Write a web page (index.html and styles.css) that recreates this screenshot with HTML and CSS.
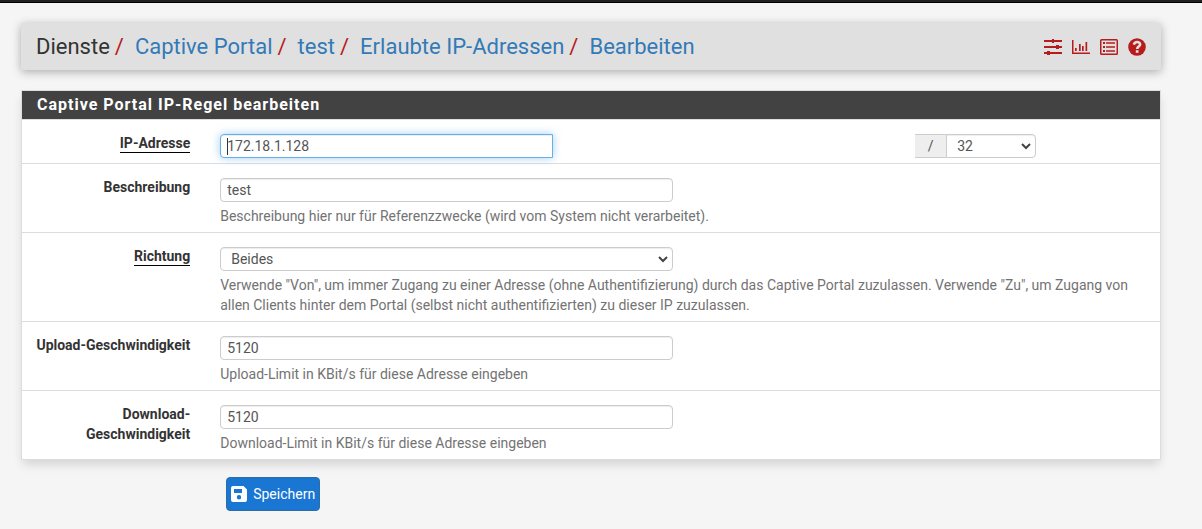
FILE: index.html
```html
<!DOCTYPE html>
<html lang="de">
<head>
<meta charset="utf-8">
<meta name="viewport" content="width=device-width, initial-scale=1">
<title>Captive Portal IP-Regel bearbeiten</title>
<link rel="stylesheet" href="styles.css">
</head>
<body>
<div class="topbar"></div>
<main class="container">
  <header class="header">
    <ol class="breadcrumb">
      <li>Dienste</li>
      <li><a href="#">Captive Portal</a></li>
      <li><a href="#">test</a></li>
      <li><a href="#">Erlaubte IP-Adressen</a></li>
      <li><a href="#">Bearbeiten</a></li>
    </ol>
    <nav class="tools">
      <a href="#" aria-label="Einstellungen"><svg width="18" height="18" viewBox="0 0 18 18" fill="currentColor"><path d="M0 2h8V1h2v1h8v2h-8v1H8V4H0zM0 8h12V7h3v1h3v2h-3v1h-3v-1H0zM0 14h3v-1h3v1h12v2H6v1H3v-1H0z"/></svg></a>
      <a href="#" aria-label="Status"><svg width="18" height="18" viewBox="0 0 18 18" fill="currentColor"><path d="M0 2h1.500v12.500H18V16H0zM3 10h1.700v3H3zM7 6h1.700v7H7zM10 8h1.700v5H10zM13.500 4h1.700v9h-1.700z"/></svg></a>
      <a href="#" aria-label="Protokoll"><svg width="18" height="18" viewBox="0 0 18 18" fill="currentColor"><path fill-rule="evenodd" d="M1.500 1h15A1.500 1.500 0 0 1 18 2.500v13a1.500 1.500 0 0 1-1.500 1.500h-15A1.500 1.500 0 0 1 0 15.500v-13A1.500 1.500 0 0 1 1.500 1zM1.500 2.500v13h15v-13z"/><path d="M3 4h2v2H3zM6 4.250h9v1.500H6zM3 8h2v2H3zM6 8.250h9v1.500H6zM3 12h2v2H3zM6 12.250h9v1.500H6z"/></svg></a>
      <a href="#" aria-label="Hilfe"><svg width="18" height="18" viewBox="0 0 18 18"><circle cx="9" cy="9" r="8.800" fill="currentColor"/><path d="M5.800 6.600C6.400 4.600 7.500 4 9.100 4c1.800 0 3 1 3 2.500C12.100 8.600 9.200 8.500 9.200 10.900" fill="none" stroke="#e0e0e0" stroke-width="2.600"/><path d="M7.800 12.200h2.700v2.600H7.800z" fill="#e0e0e0"/></svg></a>
    </nav>
  </header>

  <form>
    <section class="panel">
      <h2 class="panel-title">Captive Portal IP-Regel bearbeiten</h2>
      <div class="row">
        <label class="label" for="ip"><span class="required">IP-Adresse</span></label>
        <div class="field">
          <div class="address">
            <div class="ip"><input class="control focused" id="ip" type="text" value="172.18.1.128"><span class="caret"></span></div>
            <div class="mask">
              <span class="addon">/</span>
              <div class="select"><select class="control" aria-label="Subnetzmaske"><option>32</option></select><svg class="arrow" width="10" height="8" viewBox="0 0 10 8"><path d="M1 2l4 4 4-4" fill="none" stroke="currentColor" stroke-width="2"/></svg></div>
            </div>
          </div>
        </div>
      </div>
      <div class="row">
        <label class="label" for="descr">Beschreibung</label>
        <div class="field">
          <input class="control half" id="descr" type="text" value="test">
          <p class="help">Beschreibung hier nur für Referenzzwecke (wird vom System nicht verarbeitet).</p>
        </div>
      </div>
      <div class="row">
        <label class="label" for="dir"><span class="required">Richtung</span></label>
        <div class="field">
          <div class="select half"><select class="control" id="dir"><option>Beides</option></select><svg class="arrow" width="10" height="8" viewBox="0 0 10 8"><path d="M1 2l4 4 4-4" fill="none" stroke="currentColor" stroke-width="2"/></svg></div>
          <p class="help">Verwende "Von", um immer Zugang zu einer Adresse (ohne Authentifizierung) durch das Captive Portal zuzulassen. Verwende "Zu", um Zugang von allen Clients hinter dem Portal (selbst nicht authentifizierten) zu dieser IP zuzulassen.</p>
        </div>
      </div>
      <div class="row">
        <label class="label" for="up">Upload-Geschwindigkeit</label>
        <div class="field">
          <input class="control half" id="up" type="text" value="5120">
          <p class="help">Upload-Limit in KBit/s für diese Adresse eingeben</p>
        </div>
      </div>
      <div class="row">
        <label class="label" for="down">Download-Geschwindigkeit</label>
        <div class="field">
          <input class="control half" id="down" type="text" value="5120">
          <p class="help">Download-Limit in KBit/s für diese Adresse eingeben</p>
        </div>
      </div>
    </section>
    <div class="actions">
      <button class="save" type="button"><svg width="16" height="16" viewBox="0 0 16 16"><path fill="#fff" fill-rule="evenodd" d="M2 0h10.500L16 3.500V14a2 2 0 0 1-2 2H2a2 2 0 0 1-2-2V2a2 2 0 0 1 2-2zM3 3v4h8V3zM8 9a2.200 2.200 0 1 0 0 4.400A2.200 2.200 0 0 0 8 9z"/></svg>Speichern</button>
    </div>
  </form>
</main>
</body>
</html>
```
FILE: styles.css
```css
* { box-sizing: border-box; }

body {
  margin: 0;
  background: #f5f5f5;
  color: #333;
  font: 14px/20px Roboto, sans-serif;
}

.topbar {
  height: 3px;
  background: #212121;
  border-bottom: 1px solid #000;
}

.container { padding: 20px 41px 18px 21px; }

.header {
  display: flex;
  align-items: center;
  justify-content: space-between;
  padding: 8px 15px;
  margin-bottom: 20px;
  background: #e0e0e0;
  border-radius: 2px;
  box-shadow: 0 2px 10px rgba(0, 0, 0, .3);
}

.breadcrumb {
  display: flex;
  flex-wrap: wrap;
  margin: 0;
  padding: 0;
  list-style: none;
  font-size: 22px;
  line-height: 31px;
}

.breadcrumb li + li::before {
  content: "/";
  padding: 0 11px 0 5px;
  color: #b71c1c;
}

.breadcrumb a {
  color: #337ab7;
  text-decoration: none;
}

.tools {
  display: flex;
  gap: 10px;
}

.tools a {
  display: flex;
  color: #b71c1c;
}

.panel {
  background: #fff;
  border: 1px solid #ddd;
  box-shadow: 0 6px 10px -2px rgba(0, 0, 0, .15);
}

.panel-title {
  margin: 0;
  padding: 4px 15px;
  background: #424242;
  color: #fff;
  font-size: 16px;
  font-weight: 700;
  line-height: 20px;
  letter-spacing: 1px;
}

.row {
  display: flex;
  padding: 14px 0 5px;
  border-top: 1px solid #ddd;
}

.label {
  flex: 0 0 16.1%;
  padding: 0 15px 0 12px;
  margin-top: -1px;
  text-align: right;
  font-weight: 700;
}

.required {
  display: inline-block;
  line-height: 18px;
  border-bottom: 1px solid #000;
}

.field {
  flex: 1;
  min-width: 0;
  padding: 0 4px 0 15px;
}

.control {
  display: block;
  width: 100%;
  height: 24px;
  padding: 0 6px;
  background: #fff;
  border: 1px solid #ccc;
  border-radius: 4px;
  box-shadow: inset 0 1px 1px rgba(0, 0, 0, .075);
  color: #555;
  font: inherit;
  outline: none;
}

.half { width: 48.4%; }

.focused {
  border-color: #66afe9;
  border-radius: 4px 0 0 4px;
  box-shadow: inset 0 1px 1px rgba(0, 0, 0, .075), 0 0 8px rgba(102, 175, 233, .6);
}

.help {
  margin: 4px 0 1px;
  color: #737373;
}

.address {
  display: flex;
  justify-content: space-between;
  width: 87.2%;
}

.ip {
  position: relative;
  width: 40.8%;
}

.caret {
  position: absolute;
  top: 4px;
  left: 7px;
  width: 1px;
  height: 17px;
  background: #333;
}

.mask {
  display: flex;
  width: 121px;
}

.addon {
  width: 31px;
  border: 1px solid #ccc;
  border-width: 1px 0;
  background: #eee;
  color: #555;
  line-height: 22px;
  text-align: center;
}

.select { position: relative; }

.select .control {
  padding: 0 10px;
  appearance: none;
}

.mask .select { flex: 1; }

.mask .control { border-radius: 0 4px 4px 0; }

.arrow {
  position: absolute;
  top: 8px;
  right: 5px;
  color: #444;
  pointer-events: none;
}

.actions { padding: 17px 0 0 18%; }

.save {
  display: flex;
  align-items: center;
  gap: 6px;
  height: 34px;
  padding: 0 4px;
  background: #1976d2;
  border: 1px solid #2e6da4;
  border-radius: 4px;
  color: #fff;
  font: 14px/20px Roboto, sans-serif;
}
```
